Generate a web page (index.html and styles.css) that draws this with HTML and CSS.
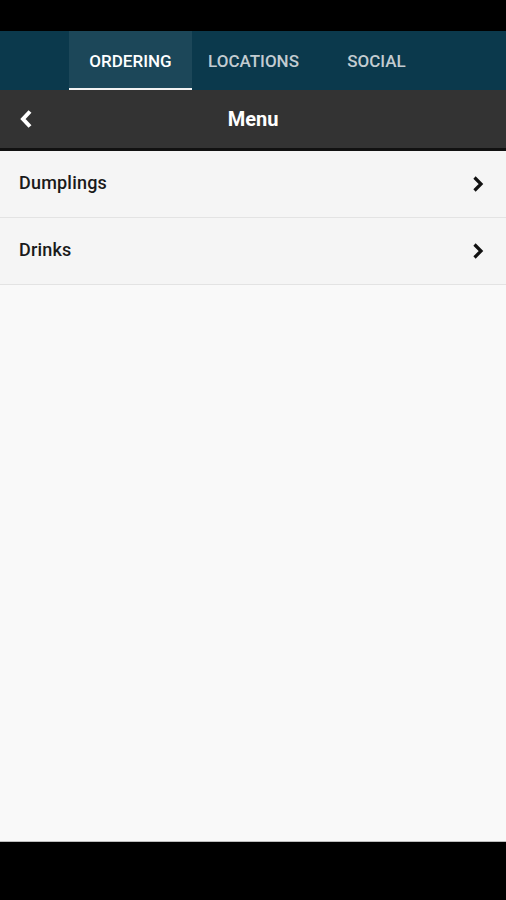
FILE: index.html
```html
<!DOCTYPE html>
<html lang="en">
<head>
  <meta charset="UTF-8">
  <title>Menu</title>
  <link rel="stylesheet" href="styles.css">
</head>
<body>

<div class="status-bar"></div>

<nav class="tabs">
  <a class="tab active">ORDERING</a>
  <a class="tab">LOCATIONS</a>
  <a class="tab">SOCIAL</a>
</nav>

<header class="title-bar">
  <button class="back">
    <svg width="16" height="22" viewBox="0 0 16 22"><path d="M12 3.5 L5 11 L12 18.5" fill="none" stroke="#fff" stroke-width="4"/></svg>
  </button>
  <h1>Menu</h1>
</header>

<main class="content">
  <ul class="menu-list">
    <li class="menu-item">
      <span>Dumplings</span>
      <svg width="14" height="18" viewBox="0 0 14 18"><path d="M3.5 2.5 L10 9 L3.5 15.5" fill="none" stroke="#111" stroke-width="3.2"/></svg>
    </li>
    <li class="menu-item">
      <span>Drinks</span>
      <svg width="14" height="18" viewBox="0 0 14 18"><path d="M3.5 2.5 L10 9 L3.5 15.5" fill="none" stroke="#111" stroke-width="3.2"/></svg>
    </li>
  </ul>
</main>

<div class="nav-bar"></div>

</body>
</html>
```

FILE: styles.css
```css
* { box-sizing: border-box; }
html, body { margin: 0; padding: 0; height: 100%; }
body {
  font-family: Roboto, "Liberation Sans", sans-serif;
  background: #000;
  display: flex;
  flex-direction: column;
}

.status-bar { height: 31px; background: #000; flex: none; }

.tabs {
  height: 59px;
  flex: none;
  background: #0b394c;
  display: flex;
  padding-left: 69px;
}
.tab {
  width: 123px;
  display: flex;
  align-items: center;
  justify-content: center;
  font-size: 17px;
  font-weight: 500;
  color: #c3ccd1;
  border-bottom: 2px solid transparent;
  padding-top: 3px;
}
.tab.active {
  background: #1c4759;
  color: #fff;
  border-bottom-color: #f2f2f2;
}

.title-bar {
  height: 61px;
  flex: none;
  background: #333;
  border-bottom: 3px solid #111;
  display: flex;
  align-items: center;
  justify-content: center;
  position: relative;
}
.title-bar h1 {
  margin: 0;
  font-size: 20px;
  font-weight: 700;
  color: #fff;
}
.back {
  position: absolute;
  left: 18px;
  top: 18px;
  background: none;
  border: none;
  padding: 0;
  display: flex;
}

.content {
  flex: 1;
  background: #f9f9f9;
  border-bottom: 1px solid #bdbdbd;
}
.menu-list { list-style: none; margin: 0; padding: 0; }
.menu-item {
  height: 67px;
  display: flex;
  align-items: center;
  justify-content: space-between;
  padding: 0 21px 0 19px;
  background: #f5f5f5;
  border-bottom: 1px solid #e3e3e3;
  font-size: 18px;
  font-weight: 500;
  color: #1a1a1a;
  letter-spacing: 0.2px;
}
.menu-item span { margin-top: -3px; }

.nav-bar { height: 58px; background: #000; flex: none; }
```
